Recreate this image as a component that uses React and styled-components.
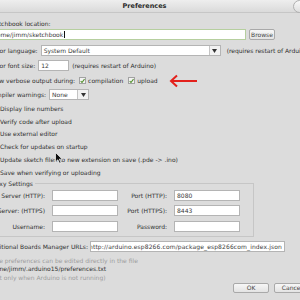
import styled, { createGlobalStyle } from "styled-components";

const GlobalStyle = createGlobalStyle`
  body {
    margin: 0;
  }
`;

const Window = styled.div`
  position: relative;
  width: 300px;
  height: 300px;
  overflow: hidden;
  background: #dcdcdc;
  font-family: "DejaVu Sans", "Liberation Sans", sans-serif;
  font-size: 6px;
  color: #303030;
`;

const TitleBar = styled.div`
  box-sizing: border-box;
  height: 13px;
  display: flex;
  align-items: center;
  justify-content: center;
  padding-right: 11px;
  background: linear-gradient(#eeeeee, #dadada);
  border-bottom: 1px solid #c6c6c6;
  font-weight: bold;
  font-size: 6.5px;
  color: #2a2a2a;
`;

const CloseButton = styled.div`
  position: absolute;
  top: 0;
  right: -6px;
  width: 11px;
  height: 11px;
  border-radius: 50%;
  border: 1px solid #b0b0b0;
  background: linear-gradient(#f8f8f8, #dedede);
`;

const Body = styled.div`
  margin-left: -12px;
  width: 322px;
  display: flex;
  flex-direction: column;
`;

const Label = styled.div`
  line-height: ${(p) => p.$lh || 8}px;
  margin-top: ${(p) => p.$mt || 0}px;
  white-space: nowrap;
  color: ${(p) => (p.$muted ? "#9c9c9c" : "inherit")};
`;

const Row = styled.div`
  display: flex;
  align-items: center;
  gap: ${(p) => p.$gap || 3}px;
  height: ${(p) => p.$h || 11}px;
  margin-top: ${(p) => p.$mt || 0}px;
  white-space: nowrap;
`;

const Field = styled.div`
  box-sizing: border-box;
  flex: none;
  width: ${(p) => p.$w}px;
  height: 11px;
  display: flex;
  align-items: center;
  justify-content: ${(p) => (p.$end ? "flex-end" : "flex-start")};
  padding: 0 2px;
  overflow: hidden;
  white-space: nowrap;
  letter-spacing: ${(p) => (p.$end ? "0.12px" : "normal")};
  background: #ffffff;
  border: 1px solid ${(p) => (p.$focus ? "#b6cf9f" : "#b4b4b4")};
  color: #3a3a3a;
`;

const Caret = styled.span`
  display: inline-block;
  width: 1px;
  height: 7px;
  margin-left: 1px;
  background: #111;
`;

const Button = styled.div`
  box-sizing: border-box;
  flex: none;
  width: ${(p) => p.$w}px;
  height: ${(p) => p.$h || 11}px;
  display: flex;
  align-items: center;
  justify-content: center;
  background: linear-gradient(#f7f7f7, #e3e3e3);
  border: 1px solid #a9a9a9;
  border-radius: 2px;
  color: #454545;
`;

const Select = styled.div`
  box-sizing: border-box;
  flex: none;
  width: ${(p) => p.$w}px;
  height: 11px;
  display: flex;
  align-items: stretch;
  background: #ffffff;
  border: 1px solid #b4b4b4;
`;

const SelectValue = styled.div`
  flex: 1;
  display: flex;
  align-items: center;
  padding-left: 2px;
  color: #3a3a3a;
`;

const SelectArrow = styled.div`
  width: 10px;
  display: flex;
  align-items: center;
  justify-content: center;
  border-left: 1px solid #c4c4c4;
  background: #f2f2f2;
`;

const Check = styled.div`
  box-sizing: border-box;
  flex: none;
  width: 7px;
  height: 7px;
  border: 1px solid #a2a2a2;
  background: #f3f3f3;
  display: flex;
  align-items: center;
  justify-content: center;
`;

const Pair = styled.div`
  display: flex;
  align-items: center;
  gap: ${(p) => p.$gap || 2}px;
  margin-left: ${(p) => p.$ml || 0}px;
`;

const CheckRow = styled.div`
  display: flex;
  align-items: center;
  gap: 5px;
  height: 12.8px;
  margin-top: ${(p) => p.$mt || 0}px;
  white-space: nowrap;
`;

const Group = styled.fieldset`
  box-sizing: border-box;
  width: 270px;
  min-inline-size: 0;
  margin: 1.2px 0 0 -4px;
  padding: 2px 13px 4px 3px;
  border: 1px solid #c6c6c6;
`;

const Legend = styled.legend`
  padding: 0 2px;
  line-height: 8px;
`;

const ProxyGrid = styled.div`
  display: grid;
  grid-template-columns: 57px 66px 42px 66px;
  column-gap: 7px;
  row-gap: 4.5px;
  align-items: center;
`;

const GridLabel = styled.div`
  justify-self: end;
  white-space: nowrap;
`;

const ButtonBar = styled.div`
  display: flex;
  justify-content: flex-end;
  gap: 5px;
  margin-top: 0.5px;
`;

const Pointer = styled.svg`
  position: absolute;
  left: 55px;
  top: 152px;
`;

const CheckMark = () => (
  <svg width="6" height="6" viewBox="0 0 6 6">
    <path d="M0.8 3.2 L2.4 4.8 L5.4 0.8" fill="none" stroke="#4f8f2a" strokeWidth="1.3" />
  </svg>
);

const DownArrow = () => (
  <svg width="5" height="4" viewBox="0 0 5 4">
    <polygon points="0,0 5,0 2.5,4" fill="#333" />
  </svg>
);

const RedArrow = () => (
  <svg width="30" height="14" viewBox="0 0 30 14" style={{ marginLeft: 6 }}>
    <path d="M3 7 H29" stroke="#e3211c" strokeWidth="2" />
    <path d="M9 1.5 L3 7 L9 12.5" fill="none" stroke="#e3211c" strokeWidth="2" />
  </svg>
);

const options = [
  "Display line numbers",
  "Verify code after upload",
  "Use external editor",
  "Check for updates on startup",
  "Update sketch files to new extension on save (.pde -> .ino)",
  "Save when verifying or uploading",
];

const proxy = [
  ["Server (HTTP):", "", "Port (HTTP):", "8080"],
  ["Server: (HTTPS)", "", "Port (HTTPS):", "8443"],
  ["Username:", "", "Password:", ""],
];

const App = () => {
  return (
    <Window>
      <GlobalStyle />
      <TitleBar>Preferences</TitleBar>
      <CloseButton />
      <Body>
        <Label $mt={7}>Sketchbook location:</Label>
        <Row $mt={1}>
          <Field $w={258} $focus>
            /home/jimm/sketchbook
            <Caret />
          </Field>
          <Button $w={26}>Browse</Button>
        </Row>
        <Row $mt={5}>
          <span>Editor language:</span>
          <Select $w={180}>
            <SelectValue>System Default</SelectValue>
            <SelectArrow>
              <DownArrow />
            </SelectArrow>
          </Select>
          <span style={{ marginLeft: 3 }}>(requires restart of Arduino)</span>
        </Row>
        <Row $mt={4}>
          <span>Editor font size:</span>
          <Field $w={31}>12</Field>
          <span>(requires restart of Arduino)</span>
        </Row>
        <Row $mt={5} $h={9} $gap={4}>
          <span>Show verbose output during:</span>
          <Pair>
            <Check>
              <CheckMark />
            </Check>
            <span>compilation</span>
          </Pair>
          <Pair $ml={1}>
            <Check>
              <CheckMark />
            </Check>
            <span>upload</span>
          </Pair>
          <RedArrow />
        </Row>
        <Row $mt={4}>
          <span>Compiler warnings:</span>
          <Select $w={40}>
            <SelectValue>None</SelectValue>
            <SelectArrow>
              <DownArrow />
            </SelectArrow>
          </Select>
        </Row>
        {options.map((text, i) => (
          <CheckRow key={text} $mt={i === 0 ? 2 : 0}>
            <Check />
            <span>{text}</span>
          </CheckRow>
        ))}
        <Group>
          <Legend>Proxy Settings</Legend>
          <ProxyGrid>
            {proxy.map(([a, av, b, bv]) => [
              <GridLabel key={a}>{a}</GridLabel>,
              <Field key={a + "f"} $w={66}>{av}</Field>,
              <GridLabel key={b}>{b}</GridLabel>,
              <Field key={b + "f"} $w={66}>{bv}</Field>,
            ])}
          </ProxyGrid>
        </Group>
        <Row $mt={4} $gap={2}>
          <span>Additional Boards Manager URLs:</span>
          <Field $w={195} $end>
            http://arduino.esp8266.com/package_esp8266com_index.json
          </Field>
        </Row>
        <Label $mt={5} $lh={8.5} $muted>
          More preferences can be edited directly in the file
        </Label>
        <Label $lh={8.5}>/home/jimm/.arduino15/preferences.txt</Label>
        <Label $lh={8.5} $muted>
          (edit only when Arduino is not running)
        </Label>
        <ButtonBar>
          <Button $w={36} $h={10}>OK</Button>
          <Button $w={36} $h={10}>Cancel</Button>
        </ButtonBar>
      </Body>
      <Pointer width="8" height="12" viewBox="0 0 8 12">
        <path d="M0.5 0.5 L0.5 10 L2.8 7.8 L4.6 11.3 L6 10.6 L4.3 7.2 L7.3 7.2 Z" fill="#111" stroke="#fff" strokeWidth="0.7" />
      </Pointer>
    </Window>
  );
};

export default App;
